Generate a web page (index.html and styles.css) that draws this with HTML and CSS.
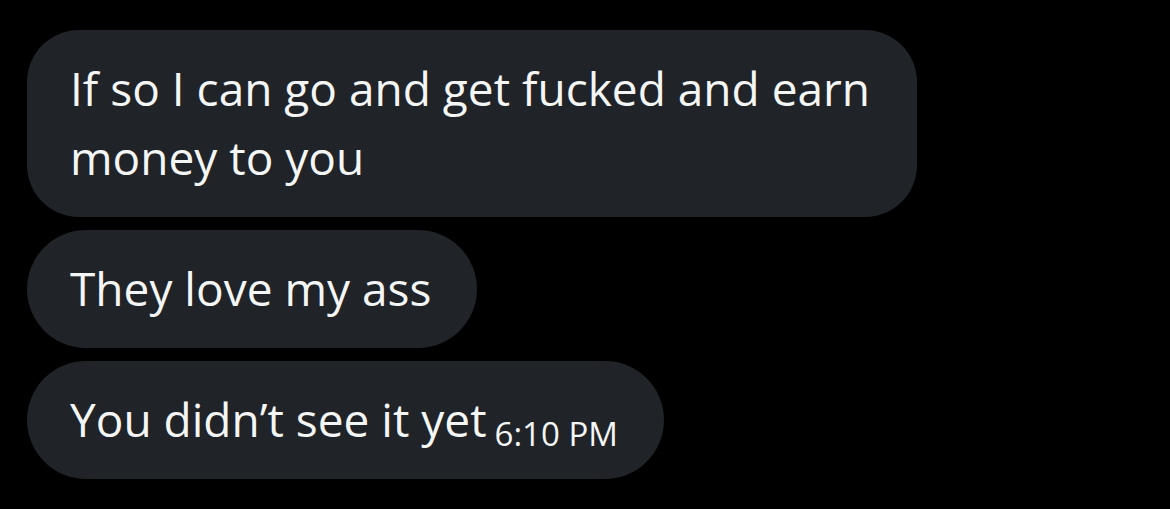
FILE: index.html
```html
<!DOCTYPE html>
<html lang="en">
<head>
    <meta charset="UTF-8">
    <meta name="viewport" content="width=device-width, initial-scale=1.0">
    <title>Messages</title>
    <link rel="stylesheet" href="styles.css">
</head>
<body>
    <div class="conversation">
        <div class="bubble bubble-wrap">If so I can go and get fucked and earn money to you</div>
        <div class="bubble">They love my ass</div>
        <div class="bubble last">
            <span>You didn’t see it yet</span>
            <span class="time">6:10 PM</span>
        </div>
    </div>
</body>
</html>
```

FILE: styles.css
```css
body {
    margin: 0;
    padding: 0;
    min-height: 100vh;
    background-color: #000;
    font-family: "Open Sans", "Liberation Sans", sans-serif;
}

.conversation {
    display: flex;
    flex-direction: column;
    align-items: flex-start;
    gap: 13px;
    padding: 30px 0 0 27px;
}

.bubble {
    background-color: #202327;
    color: #f4f5f5;
    font-size: 46px;
    line-height: 69px;
    padding: 24px 46px 25px 43px;
    border-radius: 60px;
    max-width: 801px;
}

.bubble-wrap {
    border-radius: 52px;
}

.last {
    display: flex;
    align-items: flex-end;
    gap: 8px;
}

.time {
    font-size: 33px;
    line-height: 40px;
}
```
